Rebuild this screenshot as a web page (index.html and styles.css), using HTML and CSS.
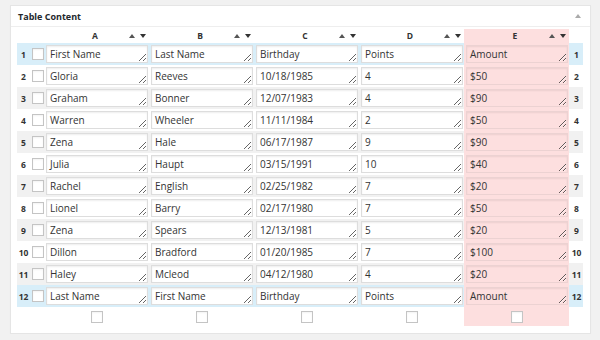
FILE: index.html
```html
<!DOCTYPE html>
<html lang="en">

<head>
    <meta charset="UTF-8">
    <title>Table Content</title>
    <link rel="stylesheet" href="styles.css">
</head>

<body>
    <!-- Panel -->
    <div class="panel">
        <div class="panel-head">
            <h2>Table Content</h2>
            <span class="toggle"></span>
        </div>

        <div class="panel-body">
            <table class="grid">
                <colgroup>
                    <col class="c-num">
                    <col class="c-check">
                    <col class="c-data">
                    <col class="c-data">
                    <col class="c-data">
                    <col class="c-data">
                    <col class="c-data">
                    <col class="c-num-r">
                </colgroup>
                <thead>
                    <tr class="letters">
                        <th></th>
                        <th></th>
                        <th><div class="head"><span></span><b>A</b><span class="sort"><i class="up"></i><i class="down"></i></span></div></th>
                        <th><div class="head"><span></span><b>B</b><span class="sort"><i class="up"></i><i class="down"></i></span></div></th>
                        <th><div class="head"><span></span><b>C</b><span class="sort"><i class="up"></i><i class="down"></i></span></div></th>
                        <th><div class="head"><span></span><b>D</b><span class="sort"><i class="up"></i><i class="down"></i></span></div></th>
                        <th class="col-e"><div class="head"><span></span><b>E</b><span class="sort"><i class="up"></i><i class="down"></i></span></div></th>
                        <th></th>
                    </tr>
                </thead>
                <tbody>
                    <tr class="row-head">
                        <td class="num">1</td>
                        <td><span class="box"></span></td>
                        <td><textarea rows="1">First Name</textarea></td>
                        <td><textarea rows="1">Last Name</textarea></td>
                        <td><textarea rows="1">Birthday</textarea></td>
                        <td><textarea rows="1">Points</textarea></td>
                        <td class="col-e"><textarea rows="1">Amount</textarea></td>
                        <td class="num">1</td>
                    </tr>
                    <tr>
                        <td class="num">2</td>
                        <td><span class="box"></span></td>
                        <td><textarea rows="1">Gloria</textarea></td>
                        <td><textarea rows="1">Reeves</textarea></td>
                        <td><textarea rows="1">10/18/1985</textarea></td>
                        <td><textarea rows="1">4</textarea></td>
                        <td class="col-e"><textarea rows="1">$50</textarea></td>
                        <td class="num">2</td>
                    </tr>
                    <tr class="alt">
                        <td class="num">3</td>
                        <td><span class="box"></span></td>
                        <td><textarea rows="1">Graham</textarea></td>
                        <td><textarea rows="1">Bonner</textarea></td>
                        <td><textarea rows="1">12/07/1983</textarea></td>
                        <td><textarea rows="1">4</textarea></td>
                        <td class="col-e"><textarea rows="1">$90</textarea></td>
                        <td class="num">3</td>
                    </tr>
                    <tr>
                        <td class="num">4</td>
                        <td><span class="box"></span></td>
                        <td><textarea rows="1">Warren</textarea></td>
                        <td><textarea rows="1">Wheeler</textarea></td>
                        <td><textarea rows="1">11/11/1984</textarea></td>
                        <td><textarea rows="1">2</textarea></td>
                        <td class="col-e"><textarea rows="1">$50</textarea></td>
                        <td class="num">4</td>
                    </tr>
                    <tr class="alt">
                        <td class="num">5</td>
                        <td><span class="box"></span></td>
                        <td><textarea rows="1">Zena</textarea></td>
                        <td><textarea rows="1">Hale</textarea></td>
                        <td><textarea rows="1">06/17/1987</textarea></td>
                        <td><textarea rows="1">9</textarea></td>
                        <td class="col-e"><textarea rows="1">$90</textarea></td>
                        <td class="num">5</td>
                    </tr>
                    <tr>
                        <td class="num">6</td>
                        <td><span class="box"></span></td>
                        <td><textarea rows="1">Julia</textarea></td>
                        <td><textarea rows="1">Haupt</textarea></td>
                        <td><textarea rows="1">03/15/1991</textarea></td>
                        <td><textarea rows="1">10</textarea></td>
                        <td class="col-e"><textarea rows="1">$40</textarea></td>
                        <td class="num">6</td>
                    </tr>
                    <tr class="alt">
                        <td class="num">7</td>
                        <td><span class="box"></span></td>
                        <td><textarea rows="1">Rachel</textarea></td>
                        <td><textarea rows="1">English</textarea></td>
                        <td><textarea rows="1">02/25/1982</textarea></td>
                        <td><textarea rows="1">7</textarea></td>
                        <td class="col-e"><textarea rows="1">$20</textarea></td>
                        <td class="num">7</td>
                    </tr>
                    <tr>
                        <td class="num">8</td>
                        <td><span class="box"></span></td>
                        <td><textarea rows="1">Lionel</textarea></td>
                        <td><textarea rows="1">Barry</textarea></td>
                        <td><textarea rows="1">02/17/1980</textarea></td>
                        <td><textarea rows="1">7</textarea></td>
                        <td class="col-e"><textarea rows="1">$50</textarea></td>
                        <td class="num">8</td>
                    </tr>
                    <tr class="alt">
                        <td class="num">9</td>
                        <td><span class="box"></span></td>
                        <td><textarea rows="1">Zena</textarea></td>
                        <td><textarea rows="1">Spears</textarea></td>
                        <td><textarea rows="1">12/13/1981</textarea></td>
                        <td><textarea rows="1">5</textarea></td>
                        <td class="col-e"><textarea rows="1">$20</textarea></td>
                        <td class="num">9</td>
                    </tr>
                    <tr>
                        <td class="num">10</td>
                        <td><span class="box"></span></td>
                        <td><textarea rows="1">Dillon</textarea></td>
                        <td><textarea rows="1">Bradford</textarea></td>
                        <td><textarea rows="1">01/20/1985</textarea></td>
                        <td><textarea rows="1">7</textarea></td>
                        <td class="col-e"><textarea rows="1">$100</textarea></td>
                        <td class="num">10</td>
                    </tr>
                    <tr class="alt">
                        <td class="num">11</td>
                        <td><span class="box"></span></td>
                        <td><textarea rows="1">Haley</textarea></td>
                        <td><textarea rows="1">Mcleod</textarea></td>
                        <td><textarea rows="1">04/12/1980</textarea></td>
                        <td><textarea rows="1">4</textarea></td>
                        <td class="col-e"><textarea rows="1">$20</textarea></td>
                        <td class="num">11</td>
                    </tr>
                    <tr class="row-head">
                        <td class="num">12</td>
                        <td><span class="box"></span></td>
                        <td><textarea rows="1">Last Name</textarea></td>
                        <td><textarea rows="1">First Name</textarea></td>
                        <td><textarea rows="1">Birthday</textarea></td>
                        <td><textarea rows="1">Points</textarea></td>
                        <td class="col-e"><textarea rows="1">Amount</textarea></td>
                        <td class="num">12</td>
                    </tr>
                </tbody>
                <tfoot>
                    <tr class="foot">
                        <td></td>
                        <td></td>
                        <td><span class="box"></span></td>
                        <td><span class="box"></span></td>
                        <td><span class="box"></span></td>
                        <td><span class="box"></span></td>
                        <td class="col-e"><span class="box"></span></td>
                        <td></td>
                    </tr>
                </tfoot>
            </table>
        </div>
    </div>
</body>

</html>
```

FILE: styles.css
```css
/* General */

html,
body {
    margin: 0;
    padding: 0;
    background-color: #f1f1f1;
    font-family: 'Open Sans', Arial, sans-serif;
    color: #333;
}

body {
    padding: 5px 9px 0 10px;
}

/* Panel */

.panel {
    background-color: #ffffff;
    border: 1px solid #e5e5e5;
    box-shadow: 0 1px 1px rgba(0, 0, 0, 0.04);
}

.panel-head {
    display: flex;
    justify-content: space-between;
    align-items: center;
    height: 20px;
    padding: 0 9px 0 7px;
    border-bottom: 1px solid #eeeeee;
}

.panel-head h2 {
    margin: 0;
    font-size: 9px;
    font-weight: 700;
    color: #23282d;
}

.toggle {
    width: 0;
    height: 0;
    border-left: 3px solid transparent;
    border-right: 3px solid transparent;
    border-bottom: 4px solid #aaaaaa;
}

.panel-body {
    padding: 2px 7px 7px 6px;
}

/* Table */

.grid {
    width: 566px;
    table-layout: fixed;
    border-collapse: separate;
    border-spacing: 0;
}

.c-num {
    width: 13px;
}

.c-check {
    width: 14px;
}

.c-data {
    width: 105px;
}

.c-num-r {
    width: 14px;
}

.grid th,
.grid td {
    padding: 0;
}

.letters th {
    height: 14px;
}

.head {
    display: grid;
    grid-template-columns: 1fr auto 1fr;
    align-items: center;
    padding-right: 3px;
}

.head b {
    font-size: 8.5px;
    font-weight: 700;
    color: #333;
    line-height: 14px;
}

.sort {
    justify-self: end;
    display: flex;
    gap: 5px;
}

.sort i {
    width: 0;
    height: 0;
    border-left: 3px solid transparent;
    border-right: 3px solid transparent;
}

.sort .up {
    border-bottom: 4px solid #555;
}

.sort .down {
    border-top: 4px solid #333;
}

.grid tbody td {
    height: 22px;
    padding: 2px 1px 2px 2px;
    box-sizing: border-box;
}

.grid tbody td.num {
    padding: 0;
    text-align: center;
    font-size: 8.5px;
    font-weight: 700;
    color: #333;
}

.grid tbody td.num:last-child {
    padding-left: 1px;
}

.row-head {
    background-color: #d8eef9;
}

.alt {
    background-color: #f1f1f1;
}

.grid .col-e {
    background-color: #fddfdf;
}

textarea {
    display: block;
    width: 100%;
    height: 18px;
    box-sizing: border-box;
    margin: 0;
    padding: 1px 4px 1px 3px;
    border: 1px solid #dddddd;
    border-radius: 0;
    box-shadow: inset 0 1px 2px rgba(0, 0, 0, 0.07);
    background-color: #ffffff;
    font-family: 'Open Sans', Arial, sans-serif;
    font-size: 10px;
    line-height: 14px;
    color: #333;
    overflow: hidden;
    white-space: nowrap;
    resize: vertical;
}

.col-e textarea {
    background-color: transparent;
    border-color: #ecd2d2;
}

.box {
    display: block;
    width: 10px;
    height: 10px;
    margin: 0 auto;
    background-color: #ffffff;
    border: 1px solid #c4c4c4;
    box-shadow: inset 0 1px 2px rgba(0, 0, 0, 0.05);
}

.grid tbody td:nth-child(2) {
    padding: 0 0 0 2px;
}

.grid tbody td:nth-child(2) .box {
    margin: 0;
}

.foot td {
    height: 19px;
    vertical-align: middle;
}
```
